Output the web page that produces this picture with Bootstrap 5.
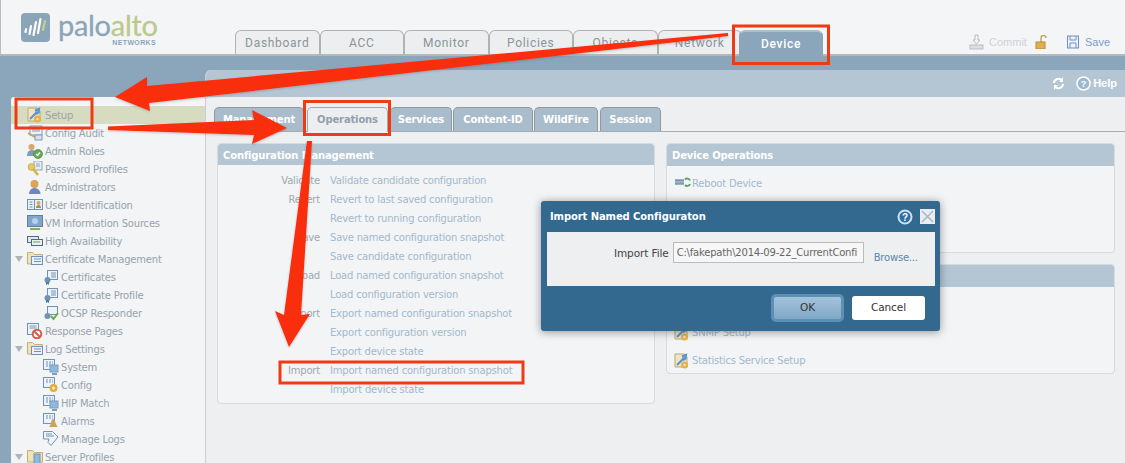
<!DOCTYPE html>
<html lang="en">
<head>
<meta charset="utf-8">
<title>Palo Alto Networks - Device</title>
<link href="https://cdn.jsdelivr.net/npm/bootstrap@5.3.0/dist/css/bootstrap.min.css" rel="stylesheet">
<style>
html,body{height:463px;overflow:hidden}
body{background:#8ba5bb;font-family:"DejaVu Sans","Liberation Sans",sans-serif;font-size:10px;letter-spacing:-.2px;color:#8c98a2;position:relative}
.topbar{height:56px;background:#f4f5f7;border-bottom:2px solid #b5b8ba;border-left:1px solid #bbb;padding-left:20px}
.logo-area{width:214px;flex:none}
.logo-box{margin-top:13px;width:29px;flex:none}
.logo-text{margin:12px 0 0 8px;width:98px}
.logo-word{font-family:"Lato",sans-serif;font-size:29px;line-height:26px;color:#8ba5b8;letter-spacing:-.3px;white-space:nowrap;-webkit-text-stroke:.3px currentColor}
.logo-word span{color:#bcc98c}
.logo-sub{font-family:"Liberation Sans",sans-serif;font-size:7px;font-weight:700;color:#8ba5b8;letter-spacing:.35px;line-height:7px;text-align:right;margin-top:1px}
.main-tabs{height:54px}
.mtab{width:84.500px;height:24px;background:#eceeef;border:1px solid #b0b3b3;border-bottom:0;border-radius:6px 6px 0 0;font-family:"Roboto",sans-serif;font-size:12px;letter-spacing:.7px;line-height:24px;text-align:center;color:#8b9499}
.mtab.on{background:#8ba5bb;color:#fff;font-weight:500;width:84px;height:26px;margin:0 0 -2px -3px;border-color:#8ba5bb;border-top:2px solid #aebfcd;line-height:25px;position:relative}
.commit-box{font-family:"Liberation Sans",sans-serif;font-size:11px;letter-spacing:0;color:#d0d3d5;position:absolute;right:15px;top:34px;height:16px}
.commit-text{margin:0 8px 0 5px}
.save-icon{margin:0 6px 0 20px}
.save-text{color:#7d9cc9}
.band{height:407px}
.side{width:194px;margin:41px 0 0 11px;background:#f2f4f6;border-radius:3px 0 0 0;padding-top:9px;overflow:hidden;color:#97a3ad;flex:none}
.tree-row{height:18px;line-height:20px;padding-left:34px;position:relative;white-space:nowrap}
.tree-row.sub{padding-left:50px}
.tree-row.sel{background:#d7dcc0}
.tree-row svg{position:absolute;left:16px;top:1px}
.tree-row.sub svg{left:32px}
.tree-row .tw{position:absolute;left:4px;top:6px;width:0;height:0;border-left:4px solid transparent;border-right:4px solid transparent;border-top:6px solid #aeb4b8}
.content{margin-top:14px;flex:1;background:#edeff1;border-left:1px solid #c8ced3;border-radius:6px 0 0 0;overflow:hidden}
.content-head{height:27px;background:#b4c6d3;font-family:"Liberation Sans",sans-serif;font-size:11px;letter-spacing:0;color:#fff;padding-right:8px;font-weight:700}
.help-wrap{gap:2px;margin-left:11px}
.subtabs{height:25px;margin-top:10px;padding-left:8px;border-bottom:1px solid #a7acaf;gap:2px}
.stab{height:24px;background:#a9bccb;border:1px solid #8d9aa2;border-bottom:0;border-radius:5px 5px 0 0;color:#fff;font-weight:700;font-size:10px;line-height:24px;text-align:center;letter-spacing:-.15px;white-space:nowrap}
.stab.on{background:#eceef0;color:#93a0ab;height:25px;margin-bottom:-1px;border-color:#a0a8ad}
.st-mgmt{width:90px}.st-oper{width:81px;margin-left:1px}.st-serv{width:62px}.st-cont{width:80px;margin-left:-1px}.st-wild{width:64px;margin-left:-1px}.st-sess{width:61px}
.panels{padding:11px 10px 0 11px;gap:11px}
.pane{background:#f2f4f6;border:1px solid #d6dbde;border-radius:4px;overflow:hidden}
.pane-head{height:21px;background:#b4c6d3;color:#fff;font-weight:700;font-size:10px;line-height:24px;padding-left:5px;letter-spacing:-.15px}
.cfg{width:438px;height:261px;flex:none}
.cfg-body{padding-top:6px}
.cfg-row{height:19px;line-height:19px;white-space:nowrap}
.cfg-label{display:inline-block;width:102px;text-align:right;margin-right:10px;color:#9ea8af}
.cfg-link{color:#a3b9cc}
.right-col{flex:1;gap:11px}
.ops,.svc{height:110px}
.ops .pane-head,.svc .pane-head{height:22px}
.op-row{height:28px;line-height:28px;padding-left:25px;position:relative;color:#a3b9cc}
.op-row svg{position:absolute;left:7px;top:6px}
.op-first{margin-top:4px}
.dlg{position:absolute;left:541px;top:201px;width:399px;height:130px;background:#33688f;border-radius:3px;box-shadow:0 1px 8px rgba(60,60,60,.55);z-index:3}
.dlg-title{height:31px;padding:0 5px 0 9px;color:#fff;font-weight:700;font-size:10px;letter-spacing:-.1px}
.dlg-close{margin-left:7px}
.dlg-body{height:54px;margin:0 5px 0 6px;background:#edeff1;color:#444;padding:10px 0 0 67px;gap:4px;font-size:10.500px;letter-spacing:-.1px}
.dlg-input{width:191px;height:21px;background:#f7f7f7;border:1px solid #bbb;padding:0 3px;line-height:20px;color:#666;white-space:nowrap;overflow:hidden;font-size:10px;letter-spacing:-.2px}
.dlg-browse{color:#5e87aa;margin:8px 0 0 6px;font-size:10px;letter-spacing:-.2px}
.dlg-foot{padding:10px 15px 0 0;gap:8px}
.dbtn{height:24px;width:73px;border-radius:3px;font-size:10.500px;padding:0;color:#333;border:0;background:#fff;letter-spacing:-.1px}
.dbtn.ok{background:linear-gradient(#a5c4dc,#7ea7c6);outline:3px solid #5e8fb5;outline-offset:-1px;width:69px;margin-right:2px}
.overlay{position:absolute;left:0;top:0;z-index:4;pointer-events:none}
</style>
</head>
<body>
<svg width="0" height="0" class="position-absolute">
<defs>
<symbol id="i-wrench" viewBox="0 0 16 16"><path d="M1 1h9l3 3v10H1z" fill="#f0e6c4" stroke="#b9a877"/><path d="M3 12L10 5M8 3.500l4-1.500-.5 3.500L9 7" stroke="#5f93cc" stroke-width="2.200" fill="#8fb8e2"/><circle cx="10.500" cy="12" r="3.600" fill="#e2b34c"/><circle cx="10.500" cy="12" r="1.200" fill="#f7e7b8"/></symbol>
<symbol id="i-doc" viewBox="0 0 16 16"><rect x="3" y="1" width="12" height="9" fill="#eef3f8" stroke="#7f9bb8"/><path d="M5 4h8M5 6h8" stroke="#7f9bb8"/><path d="M1 8l5 3 5 3" stroke="#c9a36b" stroke-width="2" fill="none"/><rect x="8" y="10" width="7" height="5" fill="#d5e3f0" stroke="#7f9bb8"/></symbol>
<symbol id="i-role" viewBox="0 0 16 16"><circle cx="4.500" cy="4" r="3" fill="#d9a864"/><path d="M0 13c0-4 2-6 5-6s4 2 4 4v2z" fill="#7f9bc0"/><circle cx="11" cy="11" r="4.500" fill="#69a84f" stroke="#3f7f36" stroke-width=".6"/><path d="M9 11l1.500 1.500L13 9.500" stroke="#fff" stroke-width="1.400" fill="none"/></symbol>
<symbol id="i-key" viewBox="0 0 16 16"><rect x="7" y="0" width="8" height="9" fill="#e6edf5" stroke="#8aa5c0"/><path d="M9 3h4M9 5h4" stroke="#8aa5c0"/><circle cx="4.500" cy="6" r="3.500" fill="#e5c861" stroke="#c4a23e" stroke-width=".6"/><path d="M6 8l5 6" stroke="#d5b24a" stroke-width="2.500"/></symbol>
<symbol id="i-admin" viewBox="0 0 16 16"><circle cx="7.500" cy="5" r="4" fill="#dba25a"/><path d="M2 15c0-4 3-6 5.500-6s6 2 6 6z" fill="#6d86c2"/></symbol>
<symbol id="i-user" viewBox="0 0 16 16"><rect x=".5" y="2.500" width="15" height="10" fill="#e9f0f6" stroke="#6f93b6"/><path d="M7.500 2.500v10M2.500 5h3M2.500 7.500h3M2.500 10h3" stroke="#6f93b6"/><circle cx="11.500" cy="6" r="2" fill="#d9a864"/><path d="M9 11c0-2 1-3 2.500-3s2.500 1 2.500 3z" fill="#a48c6a"/></symbol>
<symbol id="i-vm" viewBox="0 0 16 16"><rect x=".5" y=".5" width="15" height="11" fill="#7fa6cf" stroke="#6a7d90"/><circle cx="8" cy="6" r="3" fill="#b7d0e8"/><path d="M3 14h10" stroke="#79b25b" stroke-width="2"/></symbol>
<symbol id="i-ha" viewBox="0 0 16 16"><rect x=".5" y="3.500" width="11" height="6" fill="#dfe6ec" stroke="#54697c"/><rect x="4.500" y="6.500" width="11" height="6" fill="#e9eef3" stroke="#54697c"/><path d="M6 9h7" stroke="#69a84f"/></symbol>
<symbol id="i-folder" viewBox="0 0 16 16"><path d="M.5 13V1.500h5l2 2h8V13z" fill="#f2e3b4" stroke="#c6ae72"/><rect x="4.500" y="5.500" width="11" height="8" fill="#eaf1f7" stroke="#6f93b6"/><path d="M7 8h7M7 10.500h7" stroke="#6f93b6"/></symbol>
<symbol id="i-cert" viewBox="0 0 16 16"><rect x="4.500" y="1.500" width="10" height="9" fill="#eef3f8" stroke="#6f93b6"/><path d="M8 4h5M8 6h5M8 8h5" stroke="#6f93b6"/><circle cx="4.500" cy="11" r="3" fill="#6f93b6"/><path d="M3 13v3l1.500-1 1.500 1v-3" fill="#4e7aa4"/></symbol>
<symbol id="i-ocsp" viewBox="0 0 16 16"><rect x="4.500" y="1.500" width="10" height="8" fill="#eef3f8" stroke="#6f93b6"/><circle cx="4.500" cy="11" r="3" fill="#6f93b6"/><path d="M8 11l2.500 3L15 8" stroke="#6aa84f" stroke-width="2" fill="none"/></symbol>
<symbol id="i-resp" viewBox="0 0 16 16"><rect x=".5" y=".5" width="11" height="11" fill="#eef3f8" stroke="#6f93b6"/><path d="M2.500 3h7M2.500 5h7" stroke="#6f93b6"/><circle cx="10" cy="11" r="4.300" fill="#fff" stroke="#d85a4c" stroke-width="2"/><path d="M7 8l6 6" stroke="#d85a4c" stroke-width="2"/></symbol>
<symbol id="i-log" viewBox="0 0 16 16"><rect x=".5" y=".5" width="11" height="10" fill="#eef3f8" stroke="#6f93b6"/><path d="M3 3h7M3 5h7M3 7h7" stroke="#6f93b6" stroke-dasharray="2 1"/><rect x="7" y="6" width="8" height="7" fill="#8db8e4" stroke="#7f9bb8"/><path d="M9 15h5" stroke="#8a99a7" stroke-width="2"/></symbol>
<symbol id="i-logc" viewBox="0 0 16 16"><rect x=".5" y=".5" width="11" height="10" fill="#eef3f8" stroke="#6f93b6"/><path d="M3 3h7M3 5h7" stroke="#6f93b6" stroke-dasharray="2 1"/><circle cx="10.500" cy="11" r="4" fill="#dfae3e"/><circle cx="10.500" cy="11" r="1.500" fill="#fff1c5"/></symbol>
<symbol id="i-logb" viewBox="0 0 16 16"><rect x=".5" y=".5" width="11" height="10" fill="#eef3f8" stroke="#6f93b6"/><path d="M3 3h7M3 5h7" stroke="#6f93b6" stroke-dasharray="2 1"/><path d="M6 14c2-1 2-8 4-8s3 7 5 8z" fill="#c9a458"/></symbol>
<symbol id="i-logm" viewBox="0 0 16 16"><path d="M.5.500h9l5.500 5.500-7 8.500-3-3 1-3.500H.5z" fill="#eef3f8" stroke="#6f93b6"/><path d="M3 3h6M3 5h8" stroke="#6f93b6"/></symbol>
<symbol id="i-server" viewBox="0 0 16 16"><path d="M.5 13V1.500h5l2 2h8V13z" fill="#f2e3b4" stroke="#c6ae72"/><rect x="7" y="5" width="6" height="10" fill="#8db8e4" stroke="#6f93b6"/></symbol>
<symbol id="i-reboot" viewBox="0 0 17 12"><path d="M1 4.500h9M1 7.500h9" stroke="#7f9bb0" stroke-width="2.500" fill="none"/><path d="M11 3.500a3 3 0 0 1 5 1M16 8a3 3 0 0 1-5 1" stroke="#5ca86b" stroke-width="2" fill="none"/></symbol>
</defs>
</svg>

<header class="topbar d-flex">
  <div class="logo-area d-flex">
    <svg class="logo-box" height="29" viewBox="0 0 29 29" aria-label="logo"><rect width="29" height="29" rx="4" fill="#8ba5b8"/><path d="M4.500 19l.6-3M8.500 21l1.500-8M12.500 22l2.500-13M17 20l2.500-14" stroke="#fff" stroke-width="2.200" stroke-linecap="round"/><path d="M22 17l2-9" stroke="#c4d18e" stroke-width="2.200" stroke-linecap="round"/></svg>
    <div class="logo-text">
      <div class="logo-word">palo<span>alto</span></div>
      <div class="logo-sub">NETWORKS</div>
    </div>
  </div>
  <nav class="main-tabs d-flex align-items-end">
    <div class="mtab">Dashboard</div>
    <div class="mtab">ACC</div>
    <div class="mtab">Monitor</div>
    <div class="mtab">Policies</div>
    <div class="mtab">Objects</div>
    <div class="mtab">Network</div>
    <div class="mtab on">Device</div>
  </nav>
  <div class="commit-box d-flex align-items-center">
    <svg width="15" height="16" viewBox="0 0 15 16"><path d="M6 1h3v5h2l-3.500 4L4 6h2z" fill="none" stroke="#b9bdc0"/><rect x="1" y="11" width="13" height="4" fill="#dde0e2" stroke="#b9bdc0"/></svg>
    <span class="commit-text">Commit</span>
    <svg width="12" height="14" viewBox="0 0 12 14"><path d="M6 7V3a2.500 2.500 0 0 1 5 0" fill="none" stroke="#c9a76a" stroke-width="1.500"/><rect x="1" y="7" width="9" height="7" fill="#e0b04f" stroke="#b98a35"/></svg>
    <svg class="save-icon" width="12" height="14" viewBox="0 0 12 14"><rect x=".5" y="1" width="11" height="12" fill="#eef2f8" stroke="#6e90c4"/><path d="M3 1v4h6V1M3 13V8h6v5" fill="none" stroke="#6e90c4"/></svg>
    <span class="save-text">Save</span>
  </div>
</header>

<div class="band d-flex">
  <aside class="side">
    <div class="tree-row sel"><svg width="16" height="16"><use href="#i-wrench"/></svg>Setup</div>
    <div class="tree-row"><svg width="16" height="16"><use href="#i-doc"/></svg>Config Audit</div>
    <div class="tree-row"><svg width="16" height="16"><use href="#i-role"/></svg>Admin Roles</div>
    <div class="tree-row"><svg width="16" height="16"><use href="#i-key"/></svg>Password Profiles</div>
    <div class="tree-row"><svg width="16" height="16"><use href="#i-admin"/></svg>Administrators</div>
    <div class="tree-row"><svg width="16" height="16"><use href="#i-user"/></svg>User Identification</div>
    <div class="tree-row"><svg width="16" height="16"><use href="#i-vm"/></svg>VM Information Sources</div>
    <div class="tree-row"><svg width="16" height="16"><use href="#i-ha"/></svg>High Availability</div>
    <div class="tree-row"><span class="tw"></span><svg width="16" height="16"><use href="#i-folder"/></svg>Certificate Management</div>
    <div class="tree-row sub"><svg width="16" height="16"><use href="#i-cert"/></svg>Certificates</div>
    <div class="tree-row sub"><svg width="16" height="16"><use href="#i-cert"/></svg>Certificate Profile</div>
    <div class="tree-row sub"><svg width="16" height="16"><use href="#i-ocsp"/></svg>OCSP Responder</div>
    <div class="tree-row"><svg width="16" height="16"><use href="#i-resp"/></svg>Response Pages</div>
    <div class="tree-row"><span class="tw"></span><svg width="16" height="16"><use href="#i-folder"/></svg>Log Settings</div>
    <div class="tree-row sub"><svg width="16" height="16"><use href="#i-log"/></svg>System</div>
    <div class="tree-row sub"><svg width="16" height="16"><use href="#i-logc"/></svg>Config</div>
    <div class="tree-row sub"><svg width="16" height="16"><use href="#i-log"/></svg>HIP Match</div>
    <div class="tree-row sub"><svg width="16" height="16"><use href="#i-logb"/></svg>Alarms</div>
    <div class="tree-row sub"><svg width="16" height="16"><use href="#i-logm"/></svg>Manage Logs</div>
    <div class="tree-row"><span class="tw"></span><svg width="16" height="16"><use href="#i-server"/></svg>Server Profiles</div>
  </aside>
  <main class="content">
    <div class="content-head d-flex align-items-center justify-content-end">
      <svg width="13" height="13" viewBox="0 0 13 13"><path d="M2 6a4.500 4.500 0 0 1 8-2.500M11 7a4.500 4.500 0 0 1-8 2.500" stroke="#fff" stroke-width="2" fill="none"/><path d="M11 0v5H7zM2 13V8h4z" fill="#fff"/></svg>
      <span class="help-wrap d-flex align-items-center"><svg width="15" height="15" viewBox="0 0 15 15"><circle cx="7.500" cy="7.500" r="6.500" fill="#9eb8cd" stroke="#fff" stroke-width="1.500"/><text x="7.500" y="11" text-anchor="middle" font-size="9" font-weight="700" fill="#fff" font-family="Liberation Sans">?</text></svg>Help</span>
    </div>
    <div class="subtabs d-flex align-items-end">
      <div class="stab st-mgmt">Management</div>
      <div class="stab on st-oper">Operations</div>
      <div class="stab st-serv">Services</div>
      <div class="stab st-cont">Content-ID</div>
      <div class="stab st-wild">WildFire</div>
      <div class="stab st-sess">Session</div>
    </div>
    <div class="panels d-flex">
      <section class="pane cfg">
        <div class="pane-head">Configuration Management</div>
        <div class="cfg-body">
          <div class="cfg-row"><span class="cfg-label">Validate</span><span class="cfg-link">Validate candidate configuration</span></div>
          <div class="cfg-row"><span class="cfg-label">Revert</span><span class="cfg-link">Revert to last saved configuration</span></div>
          <div class="cfg-row"><span class="cfg-label"></span><span class="cfg-link">Revert to running configuration</span></div>
          <div class="cfg-row"><span class="cfg-label">Save</span><span class="cfg-link">Save named configuration snapshot</span></div>
          <div class="cfg-row"><span class="cfg-label"></span><span class="cfg-link">Save candidate configuration</span></div>
          <div class="cfg-row"><span class="cfg-label">Load</span><span class="cfg-link">Load named configuration snapshot</span></div>
          <div class="cfg-row"><span class="cfg-label"></span><span class="cfg-link">Load configuration version</span></div>
          <div class="cfg-row"><span class="cfg-label">Export</span><span class="cfg-link">Export named configuration snapshot</span></div>
          <div class="cfg-row"><span class="cfg-label"></span><span class="cfg-link">Export configuration version</span></div>
          <div class="cfg-row"><span class="cfg-label"></span><span class="cfg-link">Export device state</span></div>
          <div class="cfg-row"><span class="cfg-label">Import</span><span class="cfg-link">Import named configuration snapshot</span></div>
          <div class="cfg-row"><span class="cfg-label"></span><span class="cfg-link">Import device state</span></div>
        </div>
      </section>
      <div class="right-col d-flex flex-column">
        <section class="pane ops">
          <div class="pane-head">Device Operations</div>
          <div class="op-row op-first"><svg width="17" height="12"><use href="#i-reboot"/></svg>Reboot Device</div>
        </section>
        <section class="pane svc">
          <div class="pane-head">Miscellaneous</div>
          <div class="op-row op-first"><svg width="16" height="16"><use href="#i-wrench"/></svg></div>
          <div class="op-row"><svg width="16" height="16"><use href="#i-wrench"/></svg>SNMP Setup</div>
          <div class="op-row"><svg width="16" height="16"><use href="#i-wrench"/></svg>Statistics Service Setup</div>
        </section>
      </div>
    </div>
  </main>
</div>

<div class="dlg" role="dialog">
  <div class="dlg-title d-flex align-items-center">
    <span class="flex-grow-1">Import Named Configuraton</span>
    <svg width="16" height="16" viewBox="0 0 16 16"><circle cx="8" cy="8" r="6.500" fill="#2e6ea3" stroke="#cfe0ee" stroke-width="2"/><text x="8" y="11.500" text-anchor="middle" font-size="10" font-weight="700" fill="#fff" font-family="Liberation Sans">?</text></svg>
    <svg class="dlg-close" width="15" height="15" viewBox="0 0 15 15"><rect width="15" height="15" fill="#e9edf0"/><path d="M2 2l11 11M13 2L2 13" stroke="#a9b7c3" stroke-width="1.500"/></svg>
  </div>
  <div class="dlg-body d-flex">
    <span class="mt-1 text-nowrap">Import File</span>
    <div class="dlg-input">C:\fakepath\2014-09-22_CurrentConfi</div>
    <span class="dlg-browse">Browse...</span>
  </div>
  <div class="dlg-foot d-flex justify-content-end">
    <button class="dbtn ok" type="button">OK</button>
    <button class="dbtn" type="button">Cancel</button>
  </div>
</div>

<svg class="overlay" width="1125" height="463" viewBox="0 0 1125 463" fill="#f92f08" aria-hidden="true">
  <defs><filter id="sh" x="-5%" y="-5%" width="110%" height="110%"><feDropShadow dx="0" dy="1" stdDeviation="1" flood-color="#555" flood-opacity=".35"/></filter></defs>
  <g fill="none" stroke="#ef3a16" stroke-width="3">
    <rect x="733.500" y="26" width="95" height="37.500"/>
    <rect x="16" y="99" width="76" height="29"/>
    <rect x="304.500" y="101.500" width="85" height="33"/>
    <rect x="280" y="362" width="243" height="21"/>
  </g>
  <g filter="url(#sh)">
    <path d="M728 33L147 86L147 77L115 97L150 111L149 103L728 36Z"/>
    <path d="M108 126.500L254 120L252 110L287 128L252 144L254 135L108 130Z"/>
    <path d="M307 141L312 141L301 315L310 314L289 347L275 311L284 315Z"/>
  </g>
</svg>
<script src="https://cdn.jsdelivr.net/npm/bootstrap@5.3.0/dist/js/bootstrap.bundle.min.js"></script>
</body>
</html>
